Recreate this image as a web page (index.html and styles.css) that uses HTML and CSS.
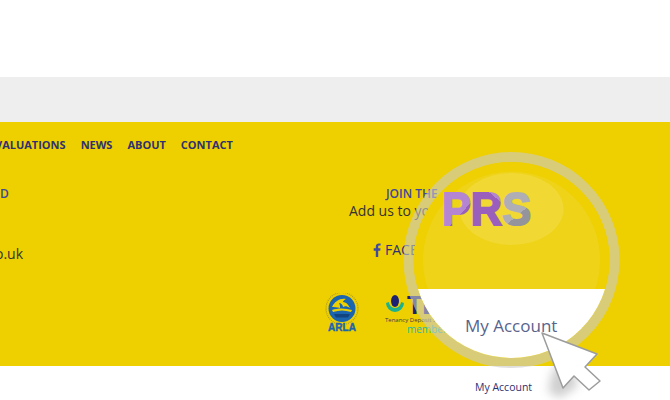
FILE: index.html
```html
<!DOCTYPE html>
<html lang="en">
<head>
<meta charset="utf-8">
<title>My Account</title>
<link rel="stylesheet" href="styles.css">
</head>
<body>
<div class="page">
  <div class="top"></div>
  <div class="strip"></div>
  <footer class="footer">
    <nav class="nav">
      <a>VALUATIONS</a><a>NEWS</a><a>ABOUT</a><a>CONTACT</a>
    </nav>
    <div class="cols">
      <div class="col-left">
        <div class="heading">D</div>
        <div class="mail">o.uk</div>
      </div>
      <div class="col-right">
        <div class="heading join">JOIN THE</div>
        <div class="add">Add us to your</div>
        <div class="social">
          <svg class="fb" viewBox="0 0 8 14" width="8" height="14"><path d="M5.2 14V7.7h2l.3-2.4H5.2V3.8c0-.7.2-1.2 1.2-1.2h1.2V.5C7.400.4 6.700.4 5.900.4 4.100.4 2.800 1.500 2.800 3.500v1.800H.7v2.400h2.100V14z"/></svg>
          <span>FACEBOOK</span>
        </div>
        <div class="logos">
          <svg class="arla" viewBox="0 0 34 40" width="34" height="40">
            <circle cx="17" cy="15.500" r="16" fill="none" stroke="#a89a30" stroke-width="1.200" stroke-dasharray="1 1"/>
            <circle cx="17" cy="15.500" r="13.500" fill="#1b64ae"/>
            <path d="M7 14c3-6 8-9 14-8-2 1-3 2-3 3 3 0 5 2 7 6-3-2-5-2-7-1 0-2-2-4-4-4 1 2 1 3 1 5-3-1-6-1-8-1z" fill="#eed000"/>
            <path d="M7 17c6-2 13-2 20 0l-1 2c-6-2-12-2-18 0z" fill="#eed000"/>
            <path d="M9 21h16l-2 3.500H11z" fill="#12447f"/>
            <text x="17" y="38" class="arla-text">ARLA</text>
          </svg>
          <div class="tds">
            <div class="tds-top">
              <svg viewBox="0 0 20 22" width="20" height="22"><path d="M1 9a9 9 0 0 0 18 0l-3-1a6 6 0 0 1-12 0z" fill="#1eb28c"/><ellipse cx="10" cy="7" rx="4" ry="6" fill="#1c2272"/></svg>
              <span class="tds-name">TDS</span>
            </div>
            <div class="tds-sub">Tenancy Deposit Scheme</div>
            <div class="tds-member">member</div>
          </div>
        </div>
      </div>
    </div>
  </footer>
  <div class="below"><a>My Account</a></div>

  <svg class="magnifier" viewBox="0 0 670 400" width="670" height="400">
    <defs>
      <clipPath id="lens-clip"><circle cx="511.500" cy="260" r="98"/></clipPath>
      <linearGradient id="purple-p" gradientUnits="userSpaceOnUse" x1="442" y1="192" x2="480" y2="226">
        <stop offset="0.560" stop-color="#b486d2"/><stop offset="0.560" stop-color="#9a5fbd"/>
      </linearGradient>
      <linearGradient id="purple-r" gradientUnits="userSpaceOnUse" x1="474" y1="226" x2="504" y2="190">
        <stop offset="0.760" stop-color="#9a5fbd"/><stop offset="0.760" stop-color="#b486d2"/>
      </linearGradient>
      <linearGradient id="grey-s" gradientUnits="userSpaceOnUse" x1="503" y1="192" x2="531" y2="226">
        <stop offset="0.620" stop-color="#aeaeb4"/><stop offset="0.620" stop-color="#94949c"/>
      </linearGradient>
      <filter id="soft" x="-40%" y="-40%" width="180%" height="180%"><feGaussianBlur stdDeviation="5"/></filter>
    </defs>
    <circle cx="511.500" cy="260" r="103" fill="none" stroke="#c9c9c8" stroke-opacity=".6" stroke-width="10"/>
    <circle cx="511.500" cy="260" r="98" fill="#eed003"/>
    <circle cx="511.500" cy="260" r="88.500" fill="#efd318"/>
    <ellipse cx="511.500" cy="209" rx="52" ry="36" fill="#f1d833"/>
    <rect x="400" y="289" width="230" height="80" fill="#fff" clip-path="url(#lens-clip)"/>
    <text class="logo-text" x="442" y="224.500" textLength="89" lengthAdjust="spacingAndGlyphs"><tspan fill="url(#purple-p)" stroke="url(#purple-p)">P</tspan><tspan fill="url(#purple-r)" stroke="url(#purple-r)">R</tspan><tspan fill="url(#grey-s)" stroke="url(#grey-s)">S</tspan></text>
    <text class="lens-link" x="465" y="332">My Account</text>
    <polygon points="552,372 568,356 578,386 560,398 548,392" fill="#888" opacity=".4" filter="url(#soft)"/>
    <polygon points="542,333 597,354 585,367 600,381 589,390 574,376 563,388" fill="#fff" stroke="#9c9c9c" stroke-width="1.500" stroke-linejoin="round"/>
  </svg>
</div>
</body>
</html>
```

FILE: styles.css
```css
* { box-sizing: border-box; }
html, body { margin: 0; padding: 0; background: #fff; }
.page {
  position: relative;
  width: 670px;
  height: 400px;
  overflow: hidden;
  font-family: "Open Sans", sans-serif;
  display: flex;
  flex-direction: column;
}
.top { height: 77px; background: #fff; flex: none; }
.strip { height: 45px; background: #eeeeee; flex: none; }
.footer { height: 244px; background: #eed000; flex: none; display: flex; flex-direction: column; }
.nav {
  display: flex;
  gap: 15px;
  margin-left: -5px;
  padding-top: 14px;
  height: 46px;
  font-size: 11px;
  line-height: 17px;
  font-weight: 700;
  color: #2f3070;
  white-space: nowrap;
}
.cols { display: flex; padding-top: 17px; }
.col-left { width: 349px; flex: none; }
.heading { font-size: 12px; line-height: 17px; font-weight: 600; color: #3f479c; white-space: nowrap; }
.mail { margin-top: 42px; margin-left: -5px; font-size: 14px; line-height: 19px; color: #333; }
.col-right { flex: 1; min-width: 0; display: flex; flex-direction: column; align-items: flex-start; }
.join { margin-left: 37px; }
.add { margin-top: -1px; font-size: 14px; line-height: 19px; color: #333; white-space: nowrap; }
.social { display: flex; align-items: center; gap: 4px; margin-top: 20px; margin-left: 24px; height: 19px; font-size: 14px; color: #2f3070; white-space: nowrap; }
.fb { fill: #3f4aa0; display: block; }
.logos { display: flex; align-items: flex-start; gap: 26px; margin-left: -24px; margin-top: 35px; }
.arla { display: block; flex: none; margin-top: -1px; }
.arla-text { font: 900 10px "Liberation Sans", sans-serif; fill: #1b64ae; text-anchor: middle; stroke: #1b64ae; stroke-width: .4px; }
.tds { flex: none; width: 90px; display: flex; flex-direction: column; }
.tds-top { display: flex; align-items: center; gap: 2px; height: 22px; }
.tds-name { font: 700 25px/22px "Liberation Sans", sans-serif; color: #1c2272; }
.tds-sub { font-size: 6px; line-height: 8px; color: #3a3a4a; white-space: nowrap; }
.tds-member { margin-left: 22px; font-size: 10px; line-height: 11px; color: #28b9a0; }
.below { flex: 1; padding: 14px 0 0 475px; font-size: 10.500px; line-height: 15px; color: #2f3070; white-space: nowrap; }
.magnifier { position: absolute; left: 0; top: 0; display: block; pointer-events: none; }
.logo-text { font: 700 47px "Liberation Sans", sans-serif; stroke-width: 2px; }
.lens-link { font: 400 17px "Open Sans", sans-serif; fill: #56648e; }
```
